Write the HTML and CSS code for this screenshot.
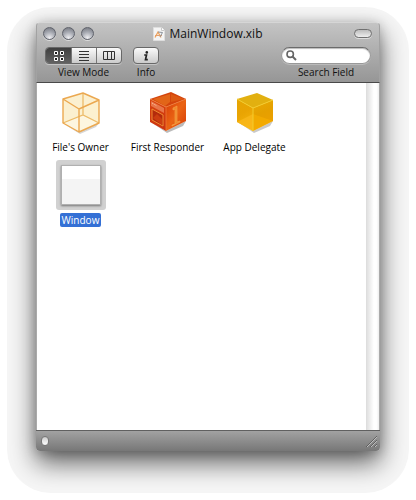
FILE: index.html
```html
<!DOCTYPE html>
<html lang="en">
<head>
<meta charset="utf-8">
<meta name="viewport" content="width=device-width, initial-scale=1">
<title>MainWindow.xib</title>
<link rel="stylesheet" href="styles.css">
</head>
<body>
<div class="halo">
<main class="window">
  <header class="chrome">
    <div class="titlebar">
      <div class="lights">
        <button class="light" type="button" aria-label="Close"></button>
        <button class="light" type="button" aria-label="Minimize"></button>
        <button class="light" type="button" aria-label="Zoom"></button>
      </div>
      <h1 class="title">
        <svg class="doc" viewBox="0 0 12 14" aria-hidden="true">
          <path d="M.5.5h8l3 3v10H.5z" fill="#f4f4f4" stroke="#dedede"/>
          <path d="M8.500.5v3h3" fill="#fff" stroke="#c8c8c8"/>
          <path d="M2 10.500 5 5 8 10.500" fill="none" stroke="#efa35c" stroke-width="1.300"/>
          <path d="M2 8.500h7" stroke="#e3a06c"/>
          <path d="M5 5 9.500 5.500 7 10" fill="none" stroke="#8d949d"/>
        </svg>
        <span>MainWindow.xib</span>
      </h1>
      <button class="pill" type="button" aria-label="Toggle toolbar"></button>
    </div>
    <div class="toolbar">
      <div class="tool">
        <div class="segments" role="group" aria-labelledby="mode">
          <button class="segment active" type="button" aria-label="Icons" aria-pressed="true">
            <svg width="12" height="11" viewBox="0 0 12 11"><path d="M1.500 1.500h3v3h-3zM7.500 1.500h3v3h-3zM1.500 7.500h3v3h-3zM7.500 7.500h3v3h-3z" fill="#222" stroke="#fff"/></svg>
          </button>
          <button class="segment" type="button" aria-label="List" aria-pressed="false">
            <svg width="10" height="10" viewBox="0 0 10 10"><path d="M0 .5h10M0 3.500h10M0 6.500h10M0 9.500h10" stroke="#333"/></svg>
          </button>
          <button class="segment" type="button" aria-label="Columns" aria-pressed="false">
            <svg width="12" height="9" viewBox="0 0 12 9"><path d="M.5.5h11v8H.5zM4.500 0v9M8.500 0v9" fill="none" stroke="#333"/></svg>
          </button>
        </div>
        <span class="caption" id="mode">View Mode</span>
      </div>
      <div class="tool">
        <button class="info" type="button" aria-labelledby="info">
          <svg width="6" height="10" viewBox="0 0 6 10"><circle cx="3.800" cy="1.400" r="1.300" fill="#222"/><path d="M1.200 4h2.300L2.500 8.600h2.300" fill="none" stroke="#222" stroke-width="1.700"/></svg>
        </button>
        <span class="caption" id="info">Info</span>
      </div>
      <div class="tool search-tool">
        <div class="search">
          <svg width="11" height="11" viewBox="0 0 11 11" aria-hidden="true"><circle cx="4.200" cy="4.200" r="3.200" fill="none" stroke="#666" stroke-width="1.600"/><path d="m6.500 6.500 3.500 3.500" stroke="#666" stroke-width="2"/></svg>
          <input class="query" id="query" type="search">
        </div>
        <label class="caption" for="query">Search Field</label>
      </div>
    </div>
  </header>

  <section class="content">
    <ul class="items">
      <li class="item">
        <div class="thumb">
          <svg width="46" height="46" viewBox="0 0 46 46" aria-hidden="true">
            <path d="M6 35 21 43 41 34 38 38 22 45z" fill="#999" opacity=".4"/>
            <path d="M5 10 25 4 41 11V34L21 43 5 34z" fill="#fbf0d0"/>
            <path d="M21 19 41 11V34L21 43z" fill="#fcf1d0"/>
            <path d="m5 34 20-8 16 8-20 9z" fill="#fdf6e0"/>
            <path d="M25 4v22M5 34l20-8 16 8" fill="none" stroke="#ecbb68" stroke-width="1.300"/>
            <path d="M5 10 25 4 41 11V34L21 43 5 34zM5 10 21 20 41 11M21 20V43" fill="none" stroke="#eba850" stroke-width="1.400" stroke-linejoin="round"/>
          </svg>
        </div>
        <span class="name">File's Owner</span>
      </li>
      <li class="item">
        <div class="thumb">
          <svg width="46" height="46" viewBox="0 0 46 46" aria-hidden="true">
            <defs>
              <linearGradient id="red" x2="0" y2="1"><stop stop-color="#d8430f"/><stop offset="1" stop-color="#cb3410"/></linearGradient>
              <linearGradient id="orange" x2="1" y2="1"><stop stop-color="#d93c08"/><stop offset=".5" stop-color="#ea6414"/><stop offset="1" stop-color="#d63a06"/></linearGradient>
            </defs>
            <path d="M6 33 21 42 41 32 38 37 22 44z" fill="#777" opacity=".5"/>
            <path d="M5 10 26 3 41 10 21 18z" fill="#d4440c"/>
            <path d="M8 10 25 5v8l-5 4z" fill="#e26518"/>
            <path d="M26 5v8l13-3z" fill="#dc5812"/>
            <path d="M5 10 21 18V42L5 33z" fill="url(#red)"/>
            <path d="M21 18 41 10V32L21 42z" fill="url(#orange)"/>
            <path d="m6 12 13 7v5L6 17z" fill="#e8764a"/>
            <path d="m7 14 5 3" stroke="#ffc8a8" stroke-dasharray="1 1"/>
            <path d="m7 20 11 6v11L7 31z" fill="#b32b0c" stroke="#ef8b32"/>
            <path d="m8 29 4-4 5 5v6z" fill="#cc3d10"/>
            <path d="m28 19 4-2v16l3-1v1l-8 4v-1l3-1V20l-2 1z" fill="#f0892b" stroke="#f6a64c" stroke-width=".6"/>
            <path d="M5 10 21 18 41 10M21 18V42" fill="none" stroke="#ee7c38" stroke-width=".8"/>
          </svg>
        </div>
        <span class="name">First Responder</span>
      </li>
      <li class="item">
        <div class="thumb">
          <svg width="46" height="46" viewBox="0 0 46 46" aria-hidden="true">
            <defs>
              <linearGradient id="gold" x2=".3" y2="1"><stop stop-color="#e5a502"/><stop offset=".5" stop-color="#e9a403"/><stop offset="1" stop-color="#f4b30c"/></linearGradient>
              <linearGradient id="amber" x2=".3" y2="1"><stop stop-color="#e8ac04"/><stop offset=".5" stop-color="#e5a000"/><stop offset="1" stop-color="#eea000"/></linearGradient>
            </defs>
            <path d="M6 33 21 42 41 32 38 37 22 44z" fill="#777" opacity=".4"/>
            <path d="M5 10 25 4 41 11 21 19z" fill="#e2b010"/>
            <path d="M5 10 21 19V42L5 33z" fill="url(#gold)"/>
            <path d="M21 19 41 11V32L21 42z" fill="url(#amber)"/>
            <path d="m5 33 16-8v17z" fill="#fbb91e" opacity=".7"/>
            <path d="m21 25 20 7-20 10z" fill="#f9b000" opacity=".6"/>
            <path d="M5 10 21 19 41 11M21 19V42" fill="none" stroke="#f3cb2c"/>
          </svg>
        </div>
        <span class="name">App Delegate</span>
      </li>
      <li class="item selected">
        <div class="thumb"><div class="preview"></div></div>
        <span class="name">Window</span>
      </li>
    </ul>
    <div class="scroller"></div>
  </section>

  <footer class="statusbar">
    <button class="knob" type="button" aria-label="Status"></button>
    <svg width="11" height="11" viewBox="0 0 11 11" aria-hidden="true"><path d="M1 11 11 1M5 11l6-6M9 11l2-2" stroke="#bcbcbc"/><path d="M0 11 11 0M4 11l7-7M8 11l3-3" stroke="#555" stroke-width=".8"/></svg>
  </footer>
</main>
</div>
</body>
</html>
```
FILE: styles.css
```css
* {
  box-sizing: border-box;
}

body {
  margin: 0;
  min-height: 100vh;
  padding: 7px;
  display: flex;
  background: #fff;
  color: #111;
  font-family: "Lucida Grande", "Open Sans", "Noto Sans", sans-serif;
  font-size: 10px;
  line-height: 14px;
}

button,
input {
  margin: 0;
  padding: 0;
  border: 0;
  font: inherit;
}

svg {
  display: block;
  flex: none;
}

.halo {
  flex: 1;
  min-width: 0;
  padding: 15px 29px 42px;
  display: flex;
  border-radius: 44px;
  background: #f6f6f6;
  overflow: hidden;
}

.window {
  flex: 1;
  min-width: 0;
  display: flex;
  flex-direction: column;
  border-radius: 4px;
  background: #fff;
  box-shadow:
    0 12px 26px rgba(0, 0, 0, 0.6),
    0 2px 12px rgba(0, 0, 0, 0.2);
}

.chrome {
  height: 61px;
  border: 1px solid #a2a2a2;
  border-top-color: #d6d6d6;
  border-bottom-color: #494949;
  border-radius: 4px 4px 0 0;
  background: linear-gradient(#c4c4c4, #969696);
}

.titlebar {
  height: 21px;
  padding: 0 7px 0 6px;
  display: grid;
  grid-template-columns: 1fr auto 1fr;
  align-items: center;
}

.lights {
  display: flex;
  gap: 6px;
}

.light {
  width: 13px;
  height: 13px;
  border: 1px solid #5f626b;
  border-radius: 50%;
  background: radial-gradient(circle at 50% 90%, #f0f0f3, #a9acb4 50%, #6f727b);
  box-shadow: 0 1px 0 #ddd;
}

.title {
  margin: 0;
  display: flex;
  align-items: center;
  gap: 5px;
  font-size: 12px;
  font-weight: 400;
  line-height: 16px;
}

.doc {
  width: 12px;
  height: 14px;
}

.pill {
  justify-self: end;
  width: 18px;
  height: 9px;
  border: 1px solid #707070;
  border-radius: 5px;
  background: linear-gradient(#bcbcbc, #eee);
  box-shadow: 0 1px 0 #ddd;
}

.toolbar {
  padding: 3px 8px 0;
  display: flex;
  gap: 11px;
}

.tool {
  display: flex;
  flex-direction: column;
  align-items: center;
  gap: 1px;
}

.search-tool {
  margin-left: auto;
}

.segments,
.info {
  height: 17px;
  display: flex;
  border: 1px solid #686868;
  border-radius: 4px;
  background: linear-gradient(#fafafa, #cbcbcb);
  box-shadow: 0 1px 0 #c5c5c5;
  overflow: hidden;
}

.info {
  width: 26px;
  align-items: center;
  justify-content: center;
}

.segment {
  width: 25px;
  display: grid;
  place-items: center;
  background: none;
}

.segment + .segment {
  border-left: 1px solid #777;
}

.segment.active {
  background: linear-gradient(#3f3f3f, #626262);
}

.search {
  width: 90px;
  height: 17px;
  padding: 0 4px;
  display: flex;
  align-items: center;
  gap: 3px;
  border: 1px solid #999;
  border-top-color: #6b6b6b;
  border-radius: 9px;
  background: #fff;
  box-shadow: inset 0 1px 1px #bbb, 0 1px 0 #bbb;
}

.query {
  min-width: 0;
  flex: 1;
  background: none;
  outline: 0;
  appearance: none;
}

.content {
  flex: 1;
  display: flex;
  border: 1px solid #aaa;
  border-width: 0 1px;
}

.items {
  flex: 1;
  margin: 0;
  padding: 4px 0 0;
  display: grid;
  grid-template-columns: repeat(auto-fill, 87px);
  align-content: start;
  gap: 6px 0;
  list-style: none;
}

.item {
  display: flex;
  flex-direction: column;
  align-items: center;
  gap: 3px;
  white-space: nowrap;
}

.thumb {
  width: 50px;
  height: 50px;
  display: grid;
  place-items: center;
  border-radius: 3px;
}

.preview {
  width: 40px;
  height: 40px;
  border: 1px solid #b0b0b0;
  background: linear-gradient(#fff 33%, #f4f4f4 33%);
  box-shadow: 0 1px 2px #777;
}

.name {
  padding: 0 2px;
  color: #000;
}

.selected .thumb {
  background: #d1d1d1;
}

.selected .name {
  border-radius: 2px;
  background: #3470d5;
  color: #fff;
}

.scroller {
  width: 13px;
  background: linear-gradient(90deg, #dcdcdc, #fff 60%, #fff 80%, #eee);
}

.statusbar {
  height: 21px;
  padding: 0 3px 0 5px;
  display: flex;
  align-items: center;
  justify-content: space-between;
  border-top: 1px solid #606060;
  border-radius: 0 0 4px 4px;
  background: linear-gradient(#a2a2a2, #777);
}

.knob {
  width: 8px;
  height: 10px;
  border: 1px solid #777;
  border-radius: 4px;
  background: linear-gradient(#ccc, #fff);
}
```
